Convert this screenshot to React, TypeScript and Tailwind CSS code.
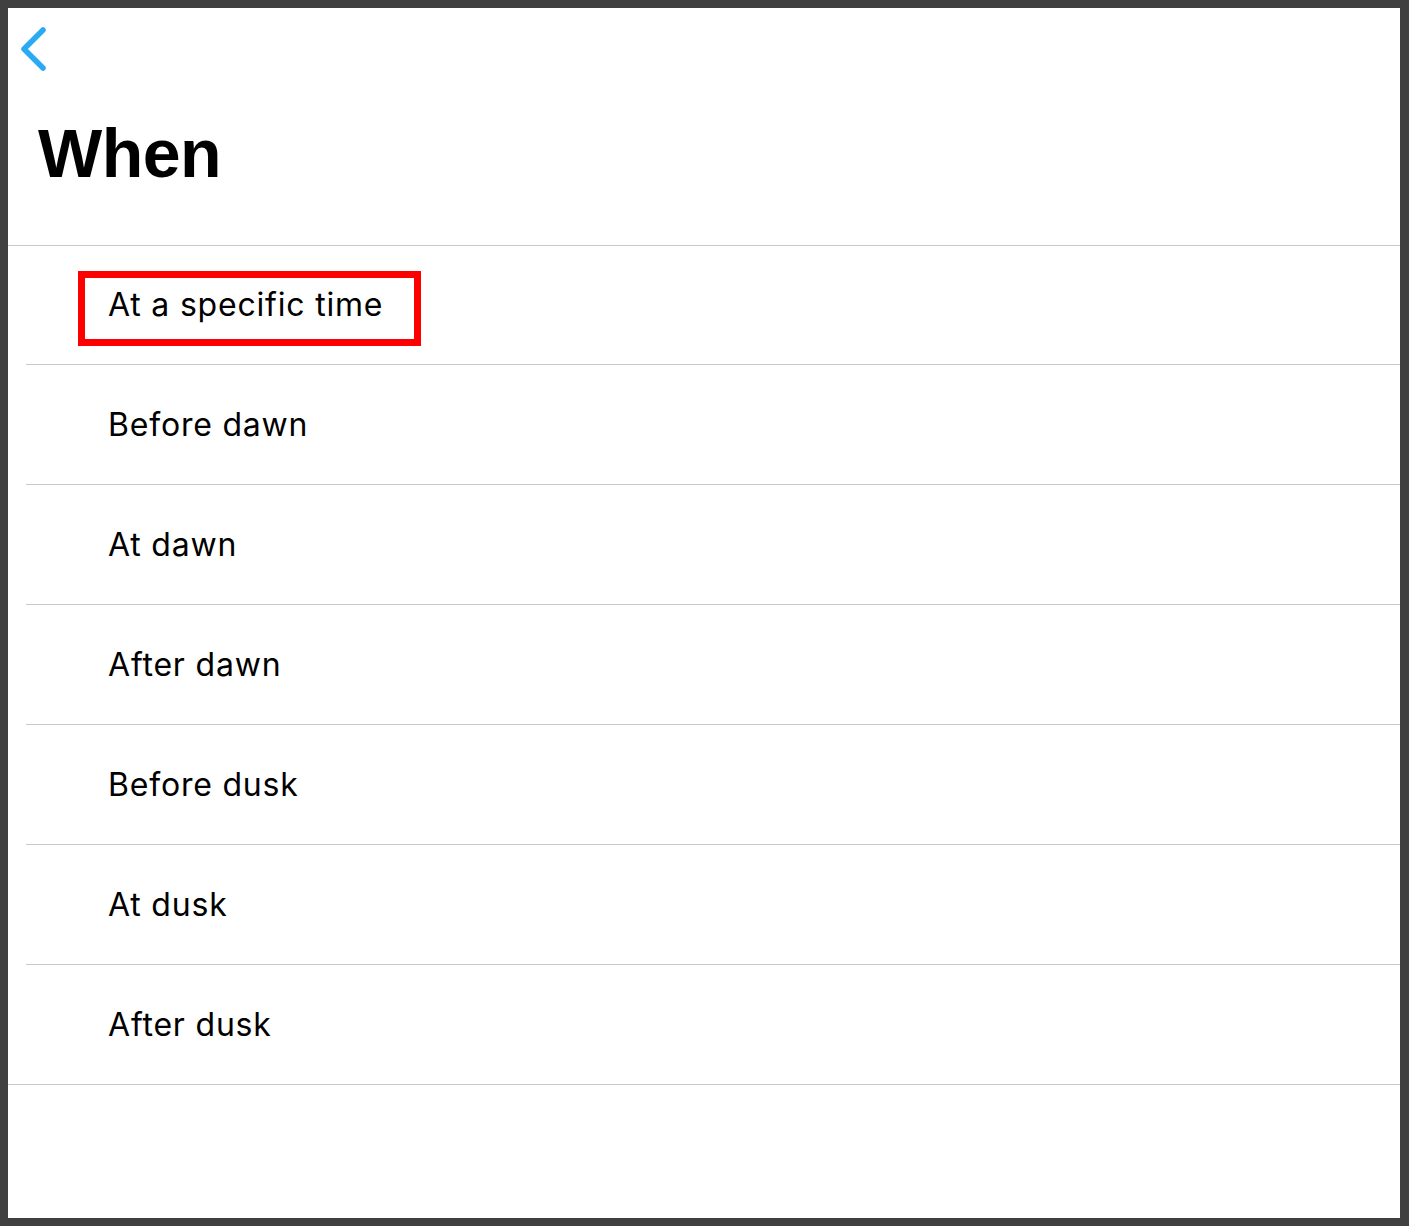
import React from 'react';

const options = [
    'At a specific time',
    'Before dawn',
    'At dawn',
    'After dawn',
    'Before dusk',
    'At dusk',
    'After dusk',
];

const App = () => {
    return (
        <div className="min-h-[1226px] bg-[#404040] pt-[8px] pl-[8px] pr-[9px] pb-[8px]">
            <div className="h-[1210px] bg-white flex flex-col" style={{ fontFamily: 'Inter, "Noto Sans", sans-serif' }}>

                {/* Nav bar */}
                <div className="h-[82px] pl-[13px] pt-[19px]">
                    <svg width="30" height="46" viewBox="0 0 30 46" fill="none">
                        <path d="M22 3 L3 22 L22 41" stroke="#2aaaf3" strokeWidth="5.5" strokeLinecap="round" strokeLinejoin="round" />
                    </svg>
                </div>

                {/* Title */}
                <div className="h-[155px] pl-[30px] pt-[23px]">
                    <h1
                        className="text-[68px] leading-[80px] font-bold text-black tracking-[-0.5px]"
                        style={{ fontFamily: '"Liberation Sans", Arial, sans-serif' }}
                    >
                        When
                    </h1>
                </div>

                {/* Options */}
                <div className="border-t border-[#c8c8c8]">
                    {options.map((label, i) => (
                        <div
                            key={label}
                            className={`${i === 0 ? 'h-[119px]' : 'h-[120px]'} flex ${i === options.length - 1 ? 'border-b border-[#c8c8c8]' : 'pl-[18px]'}`}
                        >
                            <div
                                className={`flex-1 flex items-center ${i === options.length - 1 ? 'pl-[100px]' : 'pl-[82px] border-b border-[#c8c8c8]'}`}
                            >
                                <span className="relative text-[32px] leading-[40px] text-black tracking-[0.8px]">
                                    {label}
                                    {i === 0 && (
                                        <span className="absolute left-[-30px] top-[-14px] w-[343px] h-[75px] border-[7px] border-[#ff0000]" />
                                    )}
                                </span>
                            </div>
                        </div>
                    ))}
                </div>
            </div>
        </div>
    );
};

export default App;
